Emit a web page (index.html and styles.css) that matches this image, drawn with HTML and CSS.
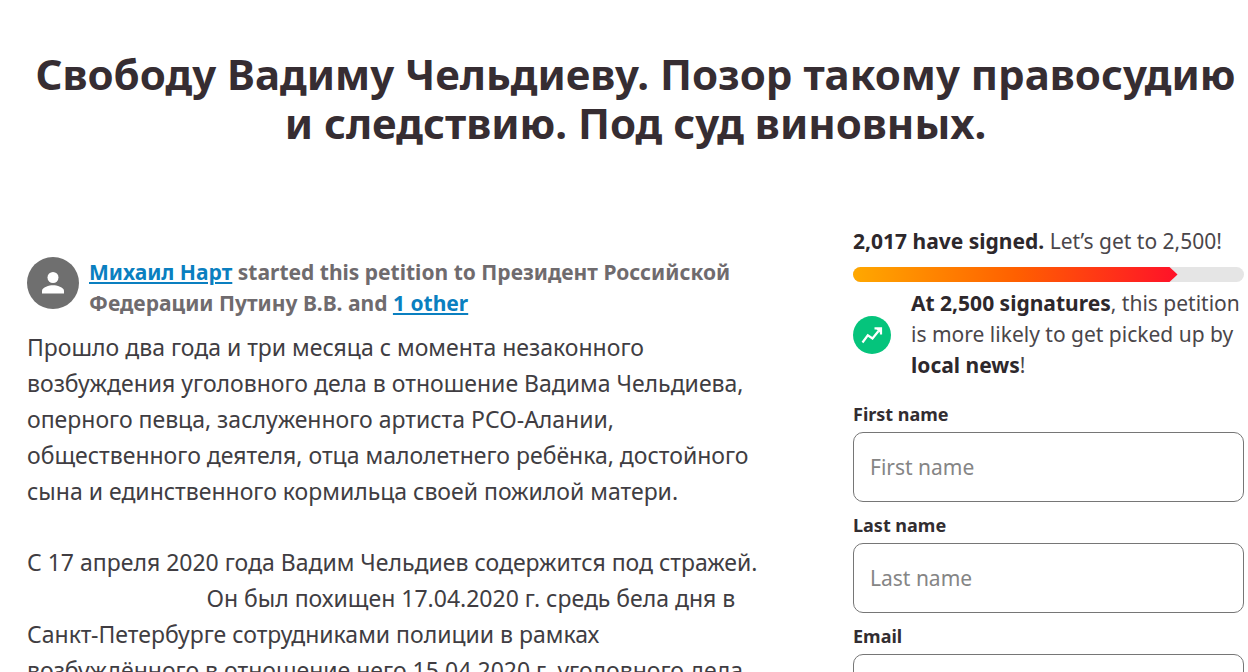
FILE: index.html
```
<!DOCTYPE html>
<html lang="ru">
  <head>
    <meta charset="UTF-8" />
    <meta name="viewport" content="width=device-width, initial-scale=1.0" />
    <title>Свободу Вадиму Чельдиеву</title>
    <link rel="stylesheet" href="styles.css">
  </head>
  <body>
    <main class="petition">
      <h1 class="petition-title">Свободу Вадиму Чельдиеву. Позор такому правосудию и&nbsp;следствию. Под суд виновных.</h1>

      <div class="columns">
        <!-- Petition text -->
        <article class="story">
          <div class="starter">
            <svg class="avatar" viewBox="0 0 52 52" aria-hidden="true">
              <circle cx="26" cy="26" r="26" fill="#6f6f6f" />
              <circle cx="26" cy="20.5" r="5.5" fill="#fff" />
              <path d="M15 36.500v-2.700c0-3.700 7.300-5.600 11-5.600s11 1.900 11 5.600v2.700z" fill="#fff" />
            </svg>
            <p class="starter-text">
              <a href="#">Михаил Нарт</a> started this petition to Президент Российской Федерации Путину В.В. and <a href="#">1 other</a>
            </p>
          </div>

          <p class="story-text">Прошло два года и три месяца с момента незаконного возбуждения уголовного дела в отношение Вадима Чельдиева, оперного певца, заслуженного артиста РСО-Алании, общественного деятеля, отца малолетнего ребёнка, достойного сына и единственного кормильца своей пожилой матери.</p>

          <p class="story-text">С 17 апреля 2020 года Вадим Чельдиев содержится под стражей.<br />&nbsp;&nbsp;&nbsp;&nbsp;&nbsp;&nbsp;&nbsp;&nbsp;&nbsp;&nbsp;&nbsp;&nbsp;&nbsp;&nbsp;&nbsp;&nbsp;&nbsp;&nbsp;&nbsp;&nbsp;&nbsp;&nbsp;&nbsp;&nbsp;&nbsp;&nbsp;&nbsp;&nbsp;&nbsp;&nbsp;Он был похищен 17.04.2020 г. средь бела дня в Санкт-Петербурге сотрудниками полиции в рамках возбуждённого в отношение него 15.04.2020 г. уголовного дела</p>
        </article>

        <!-- Sign form -->
        <aside class="sign">
          <p class="sign-text"><strong>2,017 have signed.</strong> Let’s get to 2,500!</p>
          <div class="progress-bar">
            <div class="progress" style="width: 83%"></div>
          </div>
          <div class="goal">
            <svg class="goal-icon" viewBox="0 0 38 38" aria-hidden="true">
              <circle cx="19" cy="19" r="19" fill="#05c47c" />
              <path d="M9.500 26.500l5.300-7.200 4.700 3.200 6-7.500" fill="none" stroke="#fff" stroke-width="2.200" />
              <path d="M21.500 12.300h6.500v6.200" fill="none" stroke="#fff" stroke-width="2.200" />
              <path d="M22.500 12.300h5.500v5.500z" fill="#fff" />
            </svg>
            <p class="sign-text"><strong>At 2,500 signatures</strong>, this petition is more likely to get picked up by <strong>local news</strong>!</p>
          </div>

          <form class="sign-form">
            <label for="first-name">First name</label>
            <input type="text" id="first-name" placeholder="First name" />
            <label for="last-name">Last name</label>
            <input type="text" id="last-name" placeholder="Last name" />
            <label for="email">Email</label>
            <input type="email" id="email" placeholder="Email" />
          </form>
        </aside>
      </div>
    </main>
  </body>
</html>
```

FILE: styles.css
```
* {
  box-sizing: border-box;
}

body {
  margin: 0;
  height: 100vh;
  overflow: hidden;
  background: #fff;
  color: #363135;
  font-family: "Noto Sans", sans-serif;
}

p,
h1 {
  margin: 0;
}

.petition {
  padding: 49px 4px 0 27px;
}

.petition-title {
  font-size: 42px;
  line-height: 49px;
  font-weight: bold;
  text-align: center;
  color: #362d32;
}

.columns {
  display: grid;
  grid-template-columns: minmax(0, 1fr) 391px;
  gap: 82px;
  margin-top: 79px;
}

/* Petition text */
.story {
  padding-top: 31px;
}

.starter {
  display: flex;
  align-items: flex-start;
  gap: 10px;
  margin-bottom: 10px;
}

.avatar {
  flex: none;
  width: 52px;
  height: 52px;
}

.starter-text {
  font-size: 21px;
  line-height: 31px;
  font-weight: bold;
  color: #6f6b6e;
}

.starter-text a {
  color: #0a7fc0;
}

.story-text {
  margin-bottom: 35px;
  font-size: 23px;
  line-height: 36px;
  color: #403d42;
}

/* Sign form */
.sign-text {
  font-size: 21px;
  line-height: 31px;
  color: #4a464a;
}

.sign-text strong {
  color: #2d282c;
}

.progress-bar {
  height: 15px;
  margin: 10px 0 6px;
  background: #e5e5e5;
  border-radius: 8px;
  overflow: hidden;
}

.progress {
  height: 100%;
  background: linear-gradient(to right, #ffa800, #ff6000 50%, #ff1129);
  clip-path: polygon(0 0, calc(100% - 8px) 0, 100% 50%, calc(100% - 8px) 100%, 0 100%);
}

.goal {
  display: flex;
  align-items: center;
  gap: 20px;
}

.goal-icon {
  flex: none;
  width: 38px;
  height: 38px;
}

.sign-form {
  display: flex;
  flex-direction: column;
  margin-top: 20px;
}

.sign-form label {
  margin-bottom: 5px;
  font-size: 18px;
  line-height: 26px;
  font-weight: bold;
  color: #322d31;
}

.sign-form input {
  width: 100%;
  height: 70px;
  margin-bottom: 10px;
  padding: 0 16px;
  border: 1px solid #767676;
  border-radius: 10px;
  background: #fff;
  color: #363135;
  font-family: inherit;
  font-size: 21px;
}

.sign-form input::placeholder {
  color: #858585;
}
```
